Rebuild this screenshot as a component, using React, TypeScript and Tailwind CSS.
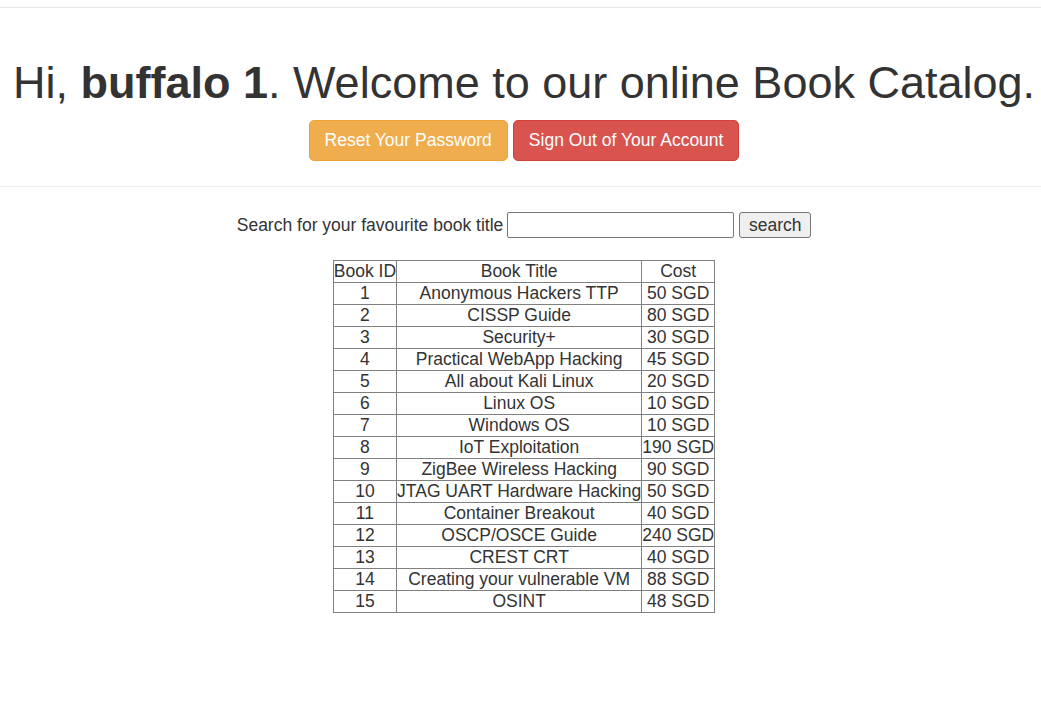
import React from 'react';

const books: [number, string, string][] = [
  [1, 'Anonymous Hackers TTP', '50 SGD'],
  [2, 'CISSP Guide', '80 SGD'],
  [3, 'Security+', '30 SGD'],
  [4, 'Practical WebApp Hacking', '45 SGD'],
  [5, 'All about Kali Linux', '20 SGD'],
  [6, 'Linux OS', '10 SGD'],
  [7, 'Windows OS', '10 SGD'],
  [8, 'IoT Exploitation', '190 SGD'],
  [9, 'ZigBee Wireless Hacking', '90 SGD'],
  [10, 'JTAG UART Hardware Hacking', '50 SGD'],
  [11, 'Container Breakout', '40 SGD'],
  [12, 'OSCP/OSCE Guide', '240 SGD'],
  [13, 'CREST CRT', '40 SGD'],
  [14, 'Creating your vulnerable VM', '88 SGD'],
  [15, 'OSINT', '48 SGD'],
];

export default function App() {
  return (
    <div
      className="min-h-[707px] overflow-x-hidden bg-white text-[#333] text-[17.5px]"
      style={{ fontFamily: '"Liberation Sans", Arial, Helvetica, sans-serif' }}
    >
      <div className="h-[8px] border-b border-[#e5e5e5]" />
      <div className="pl-[7px]">
        {/* Header */}
        <div className="pt-[50px] pb-[12px] border-b border-[#eeeeee] text-center mx-[-7px]">
          <h1 className="text-[45px] leading-[49.5px] font-normal mb-[12.5px] whitespace-nowrap">
            Hi, <b className="font-bold">buffalo 1</b>. Welcome to our online Book Catalog.
          </h1>
          <div className="flex justify-center gap-[5px] mb-[13px]">
            <button className="h-[41px] px-[15px] rounded-[5px] border border-[#eea236] bg-[#f0ad4e] text-white text-[17.5px] leading-[25px]">
              Reset Your Password
            </button>
            <button className="h-[41px] px-[15px] rounded-[5px] border border-[#d43f3a] bg-[#d9534f] text-white text-[17.5px] leading-[25px]">
              Sign Out of Your Account
            </button>
          </div>
        </div>

        {/* Search */}
        <form className="mt-[25px] flex justify-center items-center gap-[4px]">
          <label className="leading-[26px]">Search for your favourite book title</label>
          <input
            type="text"
            className="w-[227px] h-[26px] border border-[#767676] rounded-[2px] px-[2px] text-[17.5px] bg-white"
          />
          <button
            type="button"
            className="ml-[1px] h-[26px] w-[72px] border border-[#767676] rounded-[3px] bg-[#efefef] text-[17.5px] leading-[22px]"
          >
            search
          </button>
        </form>

        {/* Table */}
        <div className="mt-[22px] flex justify-center">
          <table className="border-collapse border border-[#808080] text-center leading-[21px]">
            <thead>
              <tr>
                <th className="border border-[#808080] p-0 font-normal whitespace-nowrap">Book ID</th>
                <th className="border border-[#808080] p-0 font-normal whitespace-nowrap">Book Title</th>
                <th className="border border-[#808080] p-0 font-normal whitespace-nowrap">Cost</th>
              </tr>
            </thead>
            <tbody>
              {books.map(([id, title, cost]) => (
                <tr key={id}>
                  <td className="border border-[#808080] p-0 whitespace-nowrap">{id}</td>
                  <td className="border border-[#808080] p-0 whitespace-nowrap">{title}</td>
                  <td className="border border-[#808080] p-0 whitespace-nowrap">{cost}</td>
                </tr>
              ))}
            </tbody>
          </table>
        </div>
      </div>
    </div>
  );
}
